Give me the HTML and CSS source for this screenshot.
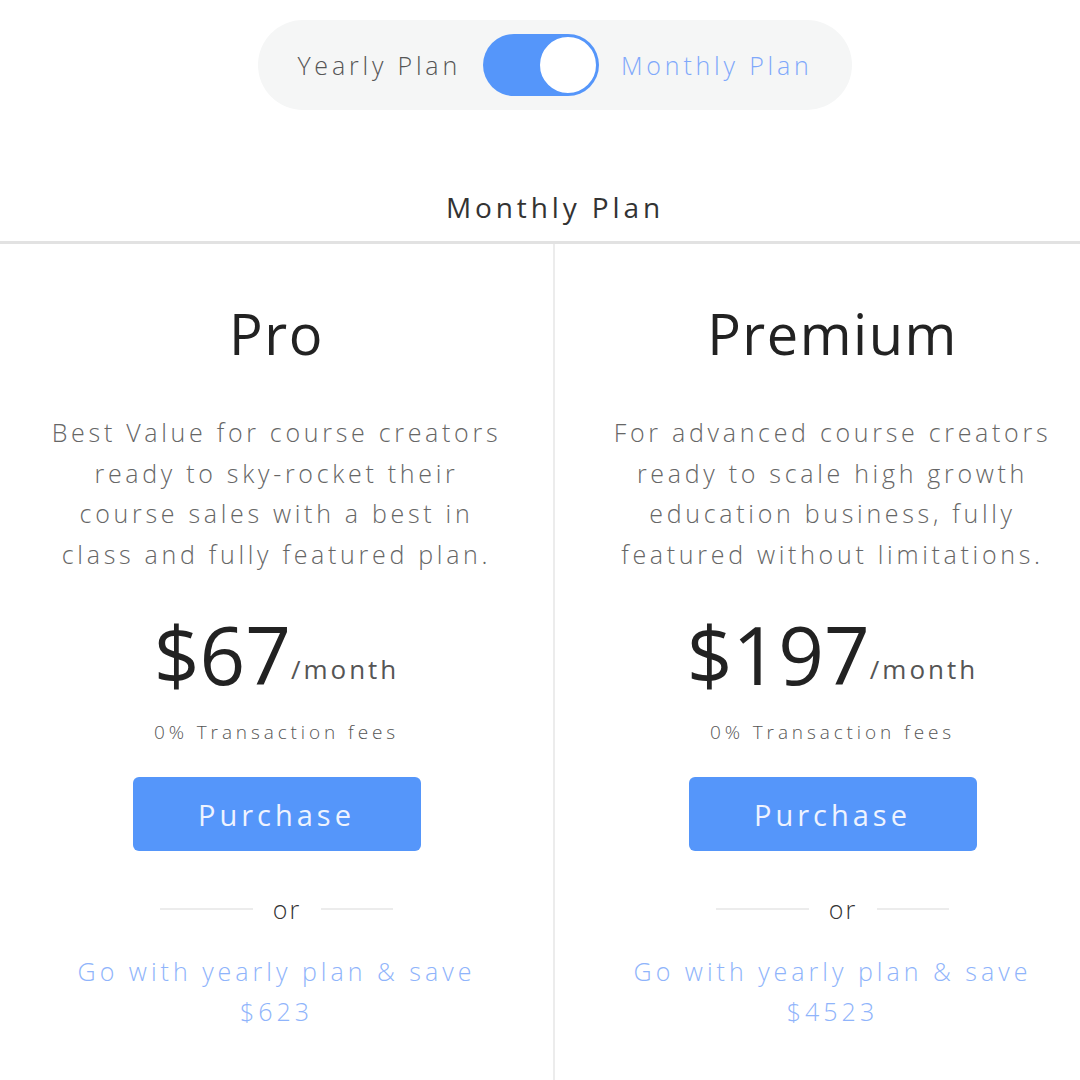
FILE: index.html
```html
<!DOCTYPE html>
<html lang="en">
<head>
    <meta charset="UTF-8">
    <meta name="viewport" content="width=device-width, initial-scale=1.0">
    <title>Pricing</title>
    <link rel="stylesheet" href="styles.css">
</head>
<body>
    <div class="page">
        <div class="toggle-bar">
            <span class="toggle-label">Yearly Plan</span>
            <label class="switch">
                <input type="checkbox" checked>
                <span class="slider"></span>
            </label>
            <span class="toggle-label active">Monthly Plan</span>
        </div>

        <div class="plan-heading">Monthly Plan</div>

        <div class="plans">
            <div class="plan">
                <h2 class="plan-name">Pro</h2>
                <p class="plan-desc">Best Value for course creators ready to sky-rocket their course sales with a best in class and fully featured plan.</p>
                <div class="price">$67<span class="per">/month</span></div>
                <div class="fees">0% Transaction fees</div>
                <button class="purchase">Purchase</button>
                <div class="or-row"><span class="line"></span><span class="or">or</span><span class="line short"></span></div>
                <a class="yearly-link" href="#">Go with yearly plan &amp; save<br>$623</a>
            </div>
            <div class="plan">
                <h2 class="plan-name">Premium</h2>
                <p class="plan-desc">For advanced course creators ready to scale high growth education business, fully featured without limitations.</p>
                <div class="price">$197<span class="per">/month</span></div>
                <div class="fees">0% Transaction fees</div>
                <button class="purchase">Purchase</button>
                <div class="or-row"><span class="line"></span><span class="or">or</span><span class="line short"></span></div>
                <a class="yearly-link" href="#">Go with yearly plan &amp; save<br>$4523</a>
            </div>
        </div>
    </div>
</body>
</html>
```

FILE: styles.css
```css
html, body {
    margin: 0;
    padding: 0;
    background: #fff;
    overflow: hidden;
}
body {
    font-family: "Open Sans", "Noto Sans", sans-serif;
    font-weight: 300;
    color: #333;
}
.page {
    width: 1110px;
}
.toggle-bar {
    width: 594px;
    height: 90px;
    margin: 20px auto 0;
    background: #f5f6f6;
    border-radius: 45px;
    display: flex;
    align-items: center;
    justify-content: center;
    gap: 22px;
}
.toggle-label {
    font-size: 25px;
    color: #555;
    letter-spacing: 3.8px;
}
.toggle-label.active {
    color: #7fa8fb;
}
.switch {
    position: relative;
    display: block;
    width: 116px;
    height: 62px;
}
.switch input {
    display: none;
}
.slider {
    display: block;
    width: 100%;
    height: 100%;
    background: #5596fa;
    border-radius: 31px;
    position: relative;
}
.slider::after {
    content: "";
    position: absolute;
    right: 1px;
    top: 1px;
    width: 60px;
    height: 60px;
    border-radius: 50%;
    background: #fff;
    border: 2px solid #5596fa;
    box-sizing: border-box;
}
.plan-heading {
    text-align: center;
    font-size: 28px;
    font-weight: 400;
    color: #333;
    letter-spacing: 3.9px;
    margin-top: 78px;
    padding-bottom: 15px;
    line-height: 38px;
    border-bottom: 3px solid #e2e2e2;
}
.plans {
    display: grid;
    grid-template-columns: 553px 1fr;
}
.plan {
    text-align: center;
    padding: 58px 50px 40px;
    height: 860px;
}
.plan + .plan {
    border-left: 2px solid #ececec;
}
.plan-name {
    margin: 0;
    font-size: 56px;
    font-weight: 400;
    line-height: 62px;
    color: #222;
    letter-spacing: 1.5px;
}
.plan-desc {
    margin: 48px 0 0;
    font-size: 25px;
    line-height: 40.5px;
    color: #666;
    letter-spacing: 3.7px;
}
.price {
    margin-top: 37px;
    font-size: 80px;
    line-height: 86px;
    font-weight: 400;
    color: #222;
}
.per {
    font-size: 26px;
    line-height: 1;
    color: #555;
    letter-spacing: 3px;
    vertical-align: 6px;
}
.fees {
    margin-top: 23px;
    font-size: 19px;
    line-height: 24px;
    color: #555;
    letter-spacing: 3.9px;
}
.purchase {
    margin-top: 33px;
    width: 288px;
    height: 74px;
    background: #5596fa;
    border: none;
    border-radius: 6px;
    color: #eef3ff;
    font-family: inherit;
    font-weight: 400;
    font-size: 29px;
    letter-spacing: 4px;
    cursor: pointer;
}
.or-row {
    margin-top: 43px;
    display: flex;
    align-items: center;
    justify-content: center;
    gap: 20px;
    line-height: 30px;
}
.line {
    display: block;
    width: 93px;
    height: 2px;
    background: #ececec;
}
.line.short {
    width: 72px;
}
.or {
    font-size: 25px;
    color: #333;
    letter-spacing: 2px;
}
.yearly-link {
    display: block;
    margin-top: 27px;
    font-size: 25px;
    line-height: 40px;
    color: #8fb4fb;
    text-decoration: none;
    letter-spacing: 4px;
}
```
